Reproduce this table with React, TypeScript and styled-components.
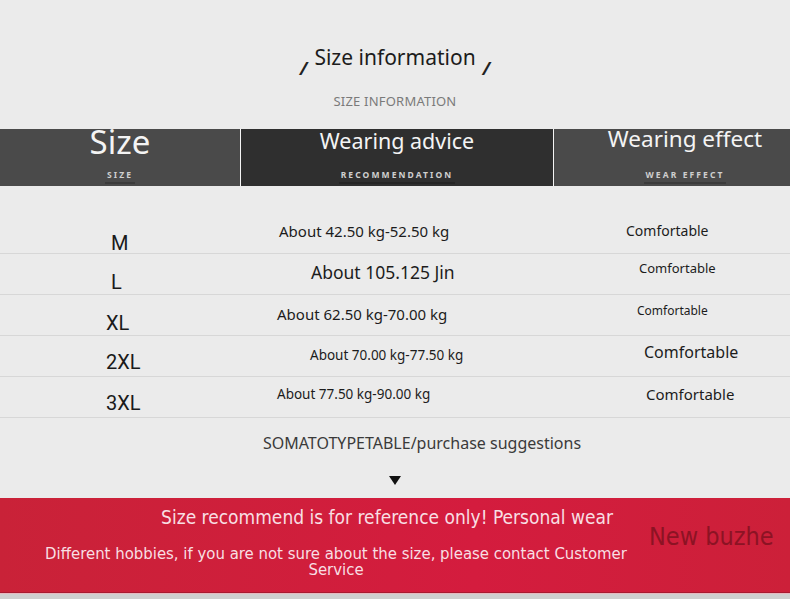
import React, { FC } from 'react'
import styled, { createGlobalStyle } from 'styled-components'

const GlobalStyle = createGlobalStyle`
  html, body {
    margin: 0;
    padding: 0;
    background: #ebebeb;
    font-family: "Noto Sans", "Open Sans", sans-serif;
  }
`

const Page = styled.div`
  width: 790px;
  height: 599px;
  overflow: hidden;
  display: flex;
  flex-direction: column;
  background: #ebebeb;
`

const TitleBlock = styled.div`
  display: flex;
  flex-direction: column;
  align-items: center;
  padding-top: 41px;
  height: 129px;
  box-sizing: border-box;
`

const TitleRow = styled.div`
  display: flex;
  align-items: flex-start;
  gap: 7px;
  color: #1c1c1c;
  font-size: 21px;
  line-height: 32px;
`

const Slash = styled.span`
  font-size: 18px;
  font-weight: 700;
  font-style: italic;
  margin-top: 15px;
  line-height: 24px;
  color: #222;
`

const SubTitle = styled.div`
  margin-top: 12px;
  font-size: 13px;
  line-height: 18px;
  color: #7a7a7a;
  letter-spacing: 0.2px;
`

const HeaderBar = styled.div`
  display: grid;
  grid-template-columns: 240px 312px 1fr;
  column-gap: 1px;
  height: 57px;
  background: #f4f4f4;
`

const HeadCell = styled.div<{ $dark?: boolean; $shift?: number }>`
  background: ${(p) => (p.$dark ? '#2f2f2f' : '#4a4a4a')};
  display: flex;
  flex-direction: column;
  align-items: center;
  padding-left: ${(p) => p.$shift ?? 0}px;
  color: #fff;
`

const HeadTitle = styled.div<{ $size: number; $top: number }>`
  font-size: ${(p) => p.$size}px;
  line-height: 1;
  margin-top: ${(p) => p.$top}px;
  color: #f4f4f4;
  white-space: nowrap;
`

const HeadSub = styled.div`
  margin-top: auto;
  margin-bottom: 2px;
  font-size: 8.5px;
  font-weight: 700;
  letter-spacing: 2.1px;
  color: #cfcfcf;
  padding: 0 2px 2px;
  border-bottom: 2px solid rgba(0, 0, 0, 0.2);
`

const Body = styled.div`
  margin-top: 27px;
  display: flex;
  flex-direction: column;
`

const Row = styled.div`
  display: grid;
  grid-template-columns: 240px 313px 1fr;
  height: 41px;
  border-bottom: 1px solid #d7d7d7;
  box-sizing: border-box;
`

const SizeCell = styled.div<{ $dx: number; $dy: number }>`
  font-family: Roboto, "Noto Sans", sans-serif;
  font-size: 20px;
  color: #1a1a1a;
  padding-left: ${(p) => p.$dx}px;
  padding-top: ${(p) => p.$dy}px;
  line-height: 1;
`

const TextCell = styled.div<{ $dx: number; $dy: number; $size: number }>`
  font-size: ${(p) => p.$size}px;
  color: #1c1c1c;
  padding-left: ${(p) => p.$dx}px;
  padding-top: ${(p) => p.$dy}px;
  line-height: 1.2;
  white-space: nowrap;
`

const Note = styled.div`
  margin-top: 14px;
  text-align: center;
  font-size: 16px;
  color: #3a3a3a;
  padding-left: 54px;
`

const Arrow = styled.div`
  align-self: center;
  margin-top: 22px;
  width: 0;
  height: 0;
  border-left: 6px solid transparent;
  border-right: 6px solid transparent;
  border-top: 9px solid #111;
`

const Banner = styled.div`
  margin-top: 13px;
  height: 94px;
  flex-shrink: 0;
  background: linear-gradient(90deg, #c92238 0%, #d41c3e 60%, #cc2039 100%);
  border-bottom: 1px solid #a81a30;
  display: flex;
  font-family: "DejaVu Sans", "Noto Sans", sans-serif;
  font-stretch: condensed;
`

const BannerText = styled.div`
  width: 672px;
  flex-shrink: 0;
  display: flex;
  flex-direction: column;
  align-items: center;
  color: #f8dfe3;
`

const BannerLead = styled.div`
  margin-top: 8px;
  padding-left: 102px;
  font-size: 19px;
  line-height: 22px;
  white-space: nowrap;
`

const BannerSmall = styled.div`
  margin-top: 18px;
  width: 620px;
  text-align: center;
  font-size: 16.6px;
  line-height: 16px;
`

const Brand = styled.div`
  margin-top: 25px;
  margin-left: -23px;
  font-size: 25px;
  line-height: 28px;
  color: #8c1324;
  white-space: nowrap;
`

const Footer = styled.div`
  flex: 1;
  background: #cfcfcf;
  border-top: 1px solid #e6b8bf;
`

type Item = {
  size: string
  sx: number
  sy: number
  advice: string
  ax: number
  ay: number
  as: number
  cx: number
  cy: number
  cs: number
}

const items: Item[] = [
  { size: 'M', sx: 111, sy: 20, advice: 'About 42.50 kg-52.50 kg', ax: 39, ay: 9, as: 15, cx: 73, cy: 10, cs: 14 },
  { size: 'L', sx: 111, sy: 18, advice: 'About 105.125 Jin', ax: 71, ay: 8, as: 17.5, cx: 86, cy: 7, cs: 13 },
  { size: 'XL', sx: 106, sy: 18, advice: 'About 62.50 kg-70.00 kg', ax: 37, ay: 10, as: 15, cx: 84, cy: 9, cs: 12 },
  { size: '2XL', sx: 106, sy: 16, advice: 'About 70.00 kg-77.50 kg', ax: 70, ay: 11, as: 13.5, cx: 91, cy: 7, cs: 16 },
  { size: '3XL', sx: 106, sy: 16, advice: 'About 77.50 kg-90.00 kg', ax: 37, ay: 9, as: 13.5, cx: 93, cy: 8, cs: 15 },
]

const App: FC = () => {
  return (
    <Page>
      <GlobalStyle />
      <TitleBlock>
        <TitleRow>
          <Slash>/</Slash>
          <span>Size information</span>
          <Slash>/</Slash>
        </TitleRow>
        <SubTitle>SIZE INFORMATION</SubTitle>
      </TitleBlock>

      <HeaderBar>
        <HeadCell>
          <HeadTitle $size={33} $top={-4}>Size</HeadTitle>
          <HeadSub>SIZE</HeadSub>
        </HeadCell>
        <HeadCell $dark>
          <HeadTitle $size={21.5} $top={1}>Wearing advice</HeadTitle>
          <HeadSub>RECOMMENDATION</HeadSub>
        </HeadCell>
        <HeadCell $shift={26}>
          <HeadTitle $size={22.5} $top={-1}>Wearing effect</HeadTitle>
          <HeadSub>WEAR EFFECT</HeadSub>
        </HeadCell>
      </HeaderBar>

      <Body>
        {items.map((it) => (
          <Row key={it.size}>
            <SizeCell $dx={it.sx} $dy={it.sy}>{it.size}</SizeCell>
            <TextCell $dx={it.ax} $dy={it.ay} $size={it.as}>{it.advice}</TextCell>
            <TextCell $dx={it.cx} $dy={it.cy} $size={it.cs}>Comfortable</TextCell>
          </Row>
        ))}
      </Body>

      <Note>SOMATOTYPETABLE/purchase suggestions</Note>
      <Arrow />

      <Banner>
        <BannerText>
          <BannerLead>Size recommend is for reference only! Personal wear</BannerLead>
          <BannerSmall>
            Different hobbies, if you are not sure about the size, please contact Customer Service
          </BannerSmall>
        </BannerText>
        <Brand>New buzhe</Brand>
      </Banner>
      <Footer />
    </Page>
  )
}

export default App
